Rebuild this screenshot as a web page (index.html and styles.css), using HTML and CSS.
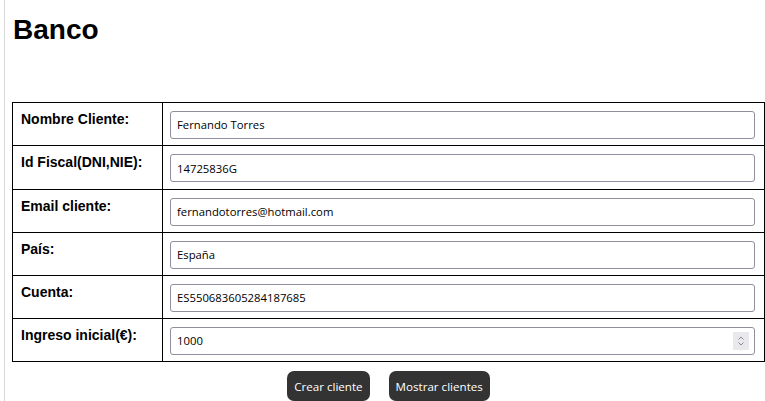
FILE: index.html
```html
<!DOCTYPE html>
<html lang="es">
<head>
<meta charset="utf-8">
<title>Banco</title>
<link rel="stylesheet" href="styles.css">
</head>
<body>
<div class="page">
  <h1 class="title">Banco</h1>
  <form class="form">
    <table class="grid">
      <tr>
        <td class="label">Nombre Cliente:</td>
        <td class="field"><input class="input" type="text" value="Fernando Torres"></td>
      </tr>
      <tr class="tall">
        <td class="label">Id Fiscal(DNI,NIE):</td>
        <td class="field"><input class="input" type="text" value="14725836G"></td>
      </tr>
      <tr>
        <td class="label">Email cliente:</td>
        <td class="field"><input class="input" type="text" value="fernandotorres@hotmail.com"></td>
      </tr>
      <tr>
        <td class="label">País:</td>
        <td class="field"><input class="input" type="text" value="España"></td>
      </tr>
      <tr>
        <td class="label">Cuenta:</td>
        <td class="field"><input class="input" type="text" value="ES550683605284187685"></td>
      </tr>
      <tr>
        <td class="label">Ingreso inicial(€):</td>
        <td class="field">
          <div class="num-wrap">
            <input class="input num" type="text" value="1000">
            <span class="spin">
              <svg width="8" height="12" viewBox="0 0 8 12"><path d="M1.5 4.5 L4 2 L6.5 4.5 M1.5 7.5 L4 10 L6.5 7.5" fill="none" stroke="#8a8a8a" stroke-width="1"/></svg>
            </span>
          </div>
        </td>
      </tr>
    </table>
    <div class="actions">
      <button class="btn" type="button">Crear cliente</button>
      <button class="btn" type="button">Mostrar clientes</button>
    </div>
  </form>
</div>
</body>
</html>
```
FILE: styles.css
```css
html, body {
  margin: 0;
  padding: 0;
  background: #fff;
}
body {
  font-family: "Liberation Sans", Arial, sans-serif;
  height: 401px;
  overflow: hidden;
}
.page {
  margin-left: 4px;
  border-left: 1px solid #d6d6d6;
  padding-left: 7px;
  min-height: 401px;
  padding-top: 14px;
  box-sizing: border-box;
}
.title {
  font-size: 28px;
  font-weight: bold;
  margin: 0 0 56px 1px;
  line-height: 32px;
  color: #000;
}
.form {
  margin: 0;
}
.grid {
  width: 753px;
  border-collapse: collapse;
  border: 1px solid #000;
}
.grid td {
  border: 1px solid #000;
  height: 43px;
  box-sizing: border-box;
  padding: 0;
}
.grid .tall td {
  height: 44px;
}
.label {
  width: 150px;
  vertical-align: top;
  padding: 8px 8px 0 8px !important;
  font-size: 14px;
  font-weight: bold;
  line-height: 16px;
  color: #000;
}
.field {
  padding: 1px 9px 0 7px !important;
  vertical-align: middle;
}
.input {
  display: block;
  width: 100%;
  height: 28px;
  box-sizing: border-box;
  border: 1px solid #8f8f9d;
  border-radius: 3px;
  padding: 0 6px;
  font-family: "Open Sans", sans-serif;
  font-size: 11.3px;
  color: #000;
  background: #fff;
}
.num-wrap {
  position: relative;
}
.spin {
  position: absolute;
  right: 6px;
  top: 5px;
  width: 16px;
  height: 18px;
  background: #e9e9ed;
  display: flex;
  align-items: center;
  justify-content: center;
}
.actions {
  display: flex;
  justify-content: center;
  gap: 19px;
  margin-top: 9px;
  width: 753px;
}
.btn {
  background: #333;
  color: #fff;
  border: none;
  border-radius: 7px;
  height: 30px;
  padding: 0 7px;
  font-family: "Open Sans", sans-serif;
  font-size: 11.6px;
}
```
